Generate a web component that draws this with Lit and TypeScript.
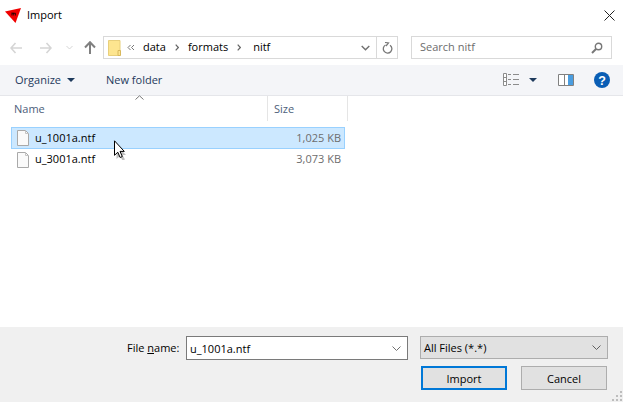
import { LitElement, html, css, svg } from "lit";
import { customElement } from "lit/decorators.js";

const fileIcon = svg`<svg class="ficon" width="12" height="16" viewBox="0 0 12 16"><path d="M.5.500h8l3 3v12H.5z" fill="#fafafa" stroke="#a9a9a9"/><path d="M8.500.5v3h3" fill="none" stroke="#c4c4c4"/></svg>`;

@customElement("app-root")
export class AppRoot extends LitElement {
  static styles = css`
    :host { display: block; width: 623px; height: 402px; background: #fff; overflow: hidden; position: relative;
      font-family: "Open Sans", "Noto Sans", sans-serif; font-size: 11px; color: #000; }
    svg { display: block; flex: none; }
    .dlg { display: flex; flex-direction: column; height: 402px; }
    .title { height: 30px; display: flex; align-items: center; padding: 0 8px 0 5px; flex: none; }
    .title .t { margin-left: 6px; margin-top: -2px; flex: 1; }
    .nav { height: 35px; display: flex; align-items: center; padding: 0 11px 0 10px; flex: none; }
    .nav .back { margin-right: 18px; }
    .nav .fwd { margin-right: 14px; }
    .nav .rec { margin-right: 11px; }
    .nav .up { margin-right: 7px; }
    .addr { width: 295px; height: 23px; box-sizing: border-box; border: 1px solid #d9d9d9; display: flex; align-items: center; padding-left: 4px; }
    .addr .crumbs { flex: 1; display: flex; align-items: center; }
    .crumb { margin-left: 8px; margin-top: -2px; }
    .crumb.mid { margin-left: 9px; }
    .crumb.last { margin-left: 12px; }
    .ch { margin-left: 9px; }
    .ch.first { margin-left: 6px; }
    .addr .dd { margin-right: 6px; }
    .addr .ref { width: 20px; height: 21px; border-left: 1px solid #d9d9d9; display: flex; align-items: center; justify-content: center; }
    .search { width: 201px; height: 23px; box-sizing: border-box; border: 1px solid #d9d9d9; margin-left: 13px; display: flex; align-items: center; justify-content: space-between; padding: 0 8px; color: #6d6d6d; }
    .search span { margin-top: -2px; }
    .tools { height: 31px; box-sizing: border-box; background: #f4f5f8; border-bottom: 1px solid #e5e6ea; display: flex; align-items: center; padding: 0 13px 1px 15px; color: #1e3a5c; flex: none; }
    .org { display: flex; align-items: center; gap: 6px; width: 91px; }
    .tools .sp { flex: 1; }
    .tools .v1 { margin-right: 9px; }
    .tools .v2 { margin-right: 21px; }
    .tools .v3 { margin-right: 20px; }
    .list { flex: 1; position: relative; }
    .sort { position: absolute; left: 135px; top: -1px; }
    .head { height: 25px; display: flex; color: #4c607a; }
    .head .n { width: 253px; padding: 5px 0 0 14px; box-sizing: content-box; border-right: 1px solid #e5e5e5; }
    .head .s { width: 73px; padding: 5px 0 0 6px; border-right: 1px solid #e5e5e5; }
    .rows { padding: 6px 0 0 11px; width: 334px; }
    .row { height: 21px; display: flex; align-items: center; padding: 0 3px 0 5px; box-sizing: border-box; border: 1px solid transparent; }
    .row.sel { background: #cce8ff; border-color: #99d1ff; height: 22px; }
    .row .name { flex: 1; margin-left: 6px; margin-top: -2px; }
    .row .size { color: #6d6d6d; margin-top: -2px; }
    .cursor { position: absolute; left: 113px; top: 44px; }
    .bottom { height: 75px; box-sizing: border-box; background: #f0f0f0; flex: none; padding: 9px 15px 0 127px; position: relative; }
    .l1 { display: flex; align-items: flex-start; }
    .lab { width: 59px; padding-top: 4px; }
    .lab u { text-decoration: underline; }
    .input { width: 222px; height: 24px; box-sizing: border-box; border: 1px solid #7a7a7a; background: #fff; display: flex; align-items: center; justify-content: space-between; padding: 0 6px 0 3px; }
    .select { width: 188px; height: 23px; margin-left: 12px; box-sizing: border-box; border: 1px solid #adadad; background: #e1e1e1; display: flex; align-items: center; justify-content: space-between; padding: 0 3px 0 3px; }
    .select svg { margin-right: 3px; }
    .l2 { display: flex; justify-content: flex-end; gap: 14px; margin-top: 6px; padding-right: 1px; }
    .btn { width: 86px; height: 24px; box-sizing: border-box; border: 1px solid #adadad; background: #e1e1e1; display: flex; align-items: center; justify-content: center; }
    .btn.def { border: 2px solid #0078d7; }
    .grip { position: absolute; right: 1px; bottom: 1px; }
  `;

  render() {
    return html`<div class="dlg">
      <div class="title">
        <svg width="16" height="16" viewBox="0 0 16 16"><path d="M0 4.500 16 1 10.500 16z" fill="#f00000"/><path d="M6.500 5.500h1v.6c.5-.7 1.200-.7 1.500 0 .5-.7 1.800-.7 1.800.6v1.800h-.9V6.900c0-.7-.8-.7-.8 0v1.600h-.8V6.900c0-.7-.8-.7-.8 0v1.600h-1z" fill="#200"/></svg>
        <span class="t">Import</span>
        <svg width="11" height="11" viewBox="0 0 11 11"><path d="M.5.500 10.500 10.500M10.500.5.500 10.500" stroke="#222" fill="none"/></svg>
      </div>
      <div class="nav">
        <svg class="back" width="12" height="12" viewBox="0 0 12 12"><path d="M5.500 1 1 6l4.500 5M1.500 6H12" stroke="#d5d5d5" stroke-width="1.600" fill="none"/></svg>
        <svg class="fwd" width="12" height="12" viewBox="0 0 12 12"><path d="M6.500 1 11 6l-4.500 5M10.500 6H0" stroke="#d5d5d5" stroke-width="1.600" fill="none"/></svg>
        <svg class="rec" width="7" height="5" viewBox="0 0 7 5"><path d="M.5 1l3 3 3-3" stroke="#d5d5d5" fill="none"/></svg>
        <svg class="up" width="12" height="13" viewBox="0 0 12 13"><path d="M1 6.500 6 1.200l5 5.300M6 2v11" stroke="#808080" stroke-width="2" fill="none"/></svg>
        <div class="addr">
          <div class="crumbs">
            <svg width="13" height="16" viewBox="0 0 13 16"><path d="M.5.500h11.500v15H.5z" fill="#fde58f" stroke="#e8cf7b"/><path d="M10 10.500h2.500v5H10z" fill="#fde58f" stroke="#d8b85c"/></svg>
            <svg class="ch first" width="8" height="7" viewBox="0 0 8 7"><path d="M3.500 1 1 3.500 3.500 6M7 1 4.500 3.500 7 6" stroke="#777" fill="none"/></svg>
            <span class="crumb">data</span>
            <svg class="ch" width="4" height="7" viewBox="0 0 4 7"><path d="M.7.700 3.300 3.500.7 6.300" stroke="#666" stroke-width="1.200" fill="none"/></svg>
            <span class="crumb mid">formats</span>
            <svg class="ch" width="4" height="7" viewBox="0 0 4 7"><path d="M.7.700 3.300 3.500.7 6.300" stroke="#666" stroke-width="1.200" fill="none"/></svg>
            <span class="crumb last">nitf</span>
          </div>
          <svg class="dd" width="9" height="6" viewBox="0 0 9 6"><path d="M.7 1 4.500 4.800 8.300 1" stroke="#707070" stroke-width="1.400" fill="none"/></svg>
          <div class="ref"><svg width="11" height="12" viewBox="0 0 11 12"><path d="M3.500 3A4.300 4.300 0 1 0 8 3.200" stroke="#777" stroke-width="1.300" fill="none"/><path d="M3 .5 6.500 1 4 4" stroke="#777" stroke-width="1.200" fill="none"/></svg></div>
        </div>
        <div class="search"><span>Search nitf</span>
          <svg width="12" height="12" viewBox="0 0 12 12"><circle cx="7.500" cy="4.500" r="3.200" stroke="#777" stroke-width="1.400" fill="none"/><path d="M5 7 1 11" stroke="#777" stroke-width="2"/></svg></div>
      </div>
      <div class="tools">
        <div class="org">Organize <svg width="8" height="4" viewBox="0 0 8 4"><path d="M0 0h8L4 4z" fill="#1e3a5c"/></svg></div>
        <span>New folder</span>
        <span class="sp"></span>
        <svg class="v1" width="17" height="13" viewBox="0 0 17 13"><path d="M.5.500h3v12h-3zM.5 4.500h3M.5 8.500h3" fill="#fff" stroke="#8c8c8c"/><path d="M5 1.500h3M10 1.500h6M5 6.500h3M10 6.500h6M5 11.500h3M10 11.500h6" stroke="#8c8c8c"/></svg>
        <svg class="v2" width="8" height="4" viewBox="0 0 8 4"><path d="M0 0h8L4 4z" fill="#1e3a5c"/></svg>
        <svg class="v3" width="16" height="12" viewBox="0 0 16 12"><path d="M.5.500h15v11H.5z" fill="#fff" stroke="#808080"/><path d="M6.500.500v11" stroke="#808080"/><path d="M10 1h5v10h-5z" fill="#4a9de0"/></svg>
        <svg width="16" height="16" viewBox="0 0 16 16"><circle cx="8" cy="8" r="8" fill="#0a5eb5"/><text x="8" y="12.500" text-anchor="middle" font-family="'Liberation Sans',sans-serif" font-weight="700" font-size="12.500" fill="#fff">?</text></svg>
      </div>
      <div class="list">
        <svg class="sort" width="9" height="5" viewBox="0 0 9 5"><path d="M.5 4.500 4.500.8l4 3.700" stroke="#777" fill="none"/></svg>
        <div class="head"><div class="n">Name</div><div class="s">Size</div></div>
        <div class="rows">
          <div class="row sel">${fileIcon}<span class="name">u_1001a.ntf</span><span class="size">1,025 KB</span></div>
          <div class="row">${fileIcon}<span class="name">u_3001a.ntf</span><span class="size">3,073 KB</span></div>
        </div>
        <svg class="cursor" width="13" height="20" viewBox="0 0 13 20"><path d="M3.500 5v14l3.500-3 2.500 4.500 2.500-1-2.500-4.500h3.500z" fill="#000" opacity=".25"/><path d="M1.500.8v14.500l3.300-3.100 2.300 5.300 2.200-1-2.300-5.100h4.300z" fill="#fff" stroke="#000"/></svg>
      </div>
      <div class="bottom">
        <div class="l1">
          <div class="lab">File <u>n</u>ame:</div>
          <div class="input"><span>u_1001a.ntf</span><svg width="9" height="5" viewBox="0 0 9 5"><path d="M.5.500l4 4 4-4" stroke="#707070" fill="none"/></svg></div>
          <div class="select"><span>All Files (*.*)</span><svg width="9" height="5" viewBox="0 0 9 5"><path d="M.5.500l4 4 4-4" stroke="#606060" fill="none"/></svg></div>
        </div>
        <div class="l2"><div class="btn def">Import</div><div class="btn">Cancel</div></div>
        <svg class="grip" width="10" height="10" viewBox="0 0 10 10"><path d="M8 0h2v2H8zM4 4h2v2H4zM8 4h2v2H8zM0 8h2v2H0zM4 8h2v2H4zM8 8h2v2H8z" fill="#bdbdbd"/></svg>
      </div>
    </div>`;
  }
}
